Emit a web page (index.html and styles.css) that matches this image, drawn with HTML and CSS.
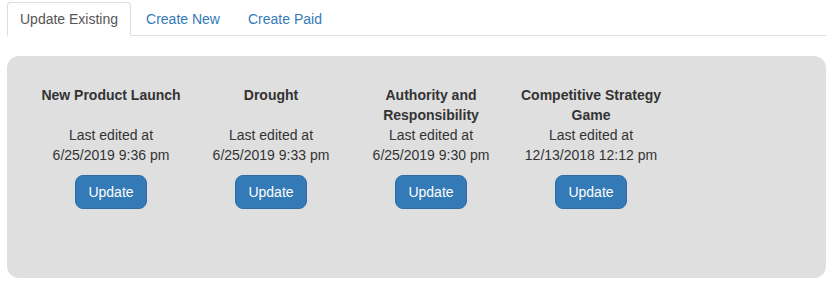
FILE: index.html
```html
<!DOCTYPE html>
<html lang="en">
<head>
    <meta charset="UTF-8">
    <title>Games</title>
    <link rel="stylesheet" href="styles.css">
</head>
<body>
    <ul class="nav-tabs">
        <li class="active"><a href="#">Update Existing</a></li>
        <li><a href="#">Create New</a></li>
        <li><a href="#">Create Paid</a></li>
    </ul>

    <div class="panel">
        <div class="game">
            <div class="game-title">New Product Launch</div>
            <div>Last edited at</div>
            <div>6/25/2019 9:36 pm</div>
            <button class="btn">Update</button>
        </div>
        <div class="game">
            <div class="game-title">Drought</div>
            <div>Last edited at</div>
            <div>6/25/2019 9:33 pm</div>
            <button class="btn">Update</button>
        </div>
        <div class="game">
            <div class="game-title">Authority and Responsibility</div>
            <div>Last edited at</div>
            <div>6/25/2019 9:30 pm</div>
            <button class="btn">Update</button>
        </div>
        <div class="game">
            <div class="game-title">Competitive Strategy Game</div>
            <div>Last edited at</div>
            <div>12/13/2018 12:12 pm</div>
            <button class="btn">Update</button>
        </div>
    </div>
</body>
</html>
```

FILE: styles.css
```css
body {
    margin: 0;
    padding: 2px 11px 0 7px;
    font-family: "Liberation Sans", Arial, sans-serif;
    font-size: 14px;
    line-height: 20px;
    color: #333;
    background-color: #fff;
}

.nav-tabs {
    display: flex;
    list-style: none;
    margin: 0;
    padding: 0;
    border-bottom: 1px solid #ddd;
}

.nav-tabs li {
    margin-right: 2px;
    margin-bottom: -1px;
}

.nav-tabs a {
    display: block;
    padding: 6px 12px;
    border: 1px solid transparent;
    border-radius: 4px 4px 0 0;
    color: #337ab7;
    text-decoration: none;
}

.nav-tabs .active a {
    color: #555;
    background-color: #fff;
    border-color: #ddd #ddd transparent;
}

.panel {
    display: flex;
    margin-top: 20px;
    padding: 29px 24px 69px;
    background-color: #dfdfdf;
    border-radius: 12px;
}

.game {
    width: 160px;
    text-align: center;
}

.game-title {
    min-height: 40px;
    font-weight: bold;
}

.btn {
    margin-top: 10px;
    padding: 6px 12px;
    font-family: inherit;
    font-size: 14px;
    line-height: 20px;
    color: #fff;
    background-color: #337ab7;
    border: 1px solid #2e6da4;
    border-radius: 8px;
    cursor: pointer;
}
```
